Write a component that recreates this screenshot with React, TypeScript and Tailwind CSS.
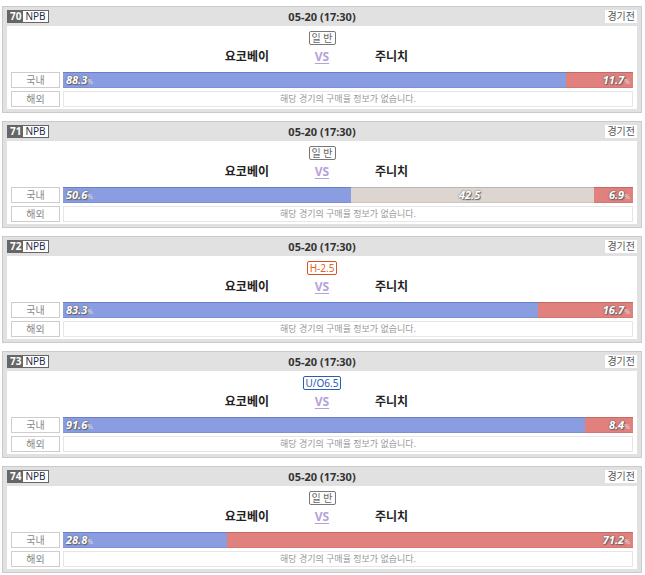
import React from "react";

type Badge = { text: string; kind: "normal" | "handi" | "uo" };

const games: { no: number; badge: Badge; parts: (number | null)[] }[] = [
  { no: 70, badge: { text: "일 반", kind: "normal" }, parts: [88.3, null, 11.7] },
  { no: 71, badge: { text: "일 반", kind: "normal" }, parts: [50.6, 42.5, 6.9] },
  { no: 72, badge: { text: "H-2.5", kind: "handi" }, parts: [83.3, null, 16.7] },
  { no: 73, badge: { text: "U/O6.5", kind: "uo" }, parts: [91.6, null, 8.4] },
  { no: 74, badge: { text: "일 반", kind: "normal" }, parts: [28.8, null, 71.2] },
];

const badgeStyle: Record<Badge["kind"], string> = {
  normal: "border-[#777] text-[#666]",
  handi: "border-[#d9541c] text-[#e0662a]",
  uo: "border-[#2c5bb5] text-[#2c5bb5]",
};

const font = { fontFamily: '"Noto Sans", "Noto Sans CJK KR", sans-serif' };

function Pct({ value }: { value: number }) {
  return (
    <span className="italic font-bold text-[11px] text-white [text-shadow:0_0_2px_#555,1px_1px_1px_#666]">
      {value}
      <span className="not-italic font-normal text-[7px] text-[#ddd] [text-shadow:none]">%</span>
    </span>
  );
}

function Bar({ parts }: { parts: (number | null)[] }) {
  const [home, draw, away] = parts;
  return (
    <div className="flex flex-1 h-[16px] overflow-hidden">
      <div
        className="flex items-center pl-[3px] bg-[#8a9de0] border-t border-b border-t-[#6c7ec8] border-b-[#7d8fd6]"
        style={{ width: `${home}%` }}
      >
        <Pct value={home!} />
      </div>
      {draw !== null && (
        <div
          className="flex items-center justify-center bg-[#ddd6d0] border-t border-b border-t-[#bdb5ae] border-b-[#cdc5be]"
          style={{ width: `${draw}%` }}
        >
          <Pct value={draw} />
        </div>
      )}
      <div
        className="flex items-center justify-end pr-[3px] bg-[#e0817e] border-t border-b border-t-[#c46966] border-b-[#d57673]"
        style={{ width: `${away}%` }}
      >
        <Pct value={away!} />
      </div>
    </div>
  );
}

function GameCard({ no, badge, parts }: { no: number; badge: Badge; parts: (number | null)[] }) {
  return (
    <div className="w-[640px] border border-[#cacaca] bg-[#e1e1e1] px-[4px] pb-[3px]">
      <div className="relative flex items-center h-[19px]">
        <div className="flex h-[13px] border border-[#666] text-[10px] leading-[11px]">
          <span className="bg-[#666] text-white font-bold px-[2px]">{no}</span>
          <span className="bg-white text-[#1d2b4a] px-[2px]">NPB</span>
        </div>
        <div className="absolute inset-x-0 text-center text-[11px] font-bold text-[#333] leading-[19px]">
          05-20 (17:30)
        </div>
        <div className="ml-auto bg-white h-[13px] px-[2px] text-[10px] leading-[13px] text-[#555]">경기전</div>
      </div>
      <div className="bg-white h-[83px] pt-[5px] px-[4px]">
        <div className="flex justify-center">
          <span
            className={`h-[14px] px-[2px] border rounded-[2px] text-[10px] leading-[12px] ${badgeStyle[badge.kind]}`}
          >
            {badge.text}
          </span>
        </div>
        <div className="flex justify-center items-center h-[24px] mb-[3px] text-[12px] font-bold text-[#222]">
          <div className="w-[150px] text-right">요코베이</div>
          <div className="w-[106px] text-center text-[#b5a2d9] underline underline-offset-2">VS</div>
          <div className="w-[150px] text-left">주니치</div>
        </div>
        <div className="flex gap-[3px]">
          <div className="w-[49px] h-[16px] border border-[#cdcdcd] text-center text-[10px] leading-[14px] text-[#888]">
            국내
          </div>
          <Bar parts={parts} />
        </div>
        <div className="flex gap-[3px] mt-[3px]">
          <div className="w-[49px] h-[16px] border border-[#cdcdcd] text-center text-[10px] leading-[14px] text-[#888]">
            해외
          </div>
          <div className="flex-1 h-[16px] border border-[#e6e6e6] text-center text-[9px] leading-[14px] text-[#999]">
            해당 경기의 구매율 정보가 없습니다.
          </div>
        </div>
      </div>
    </div>
  );
}

export default function App() {
  return (
    <div className="bg-white min-h-screen pt-[6px] pl-[2px]" style={font}>
      <div className="flex flex-col gap-[8px]">
        {games.map((g) => (
          <GameCard key={g.no} {...g} />
        ))}
      </div>
    </div>
  );
}
